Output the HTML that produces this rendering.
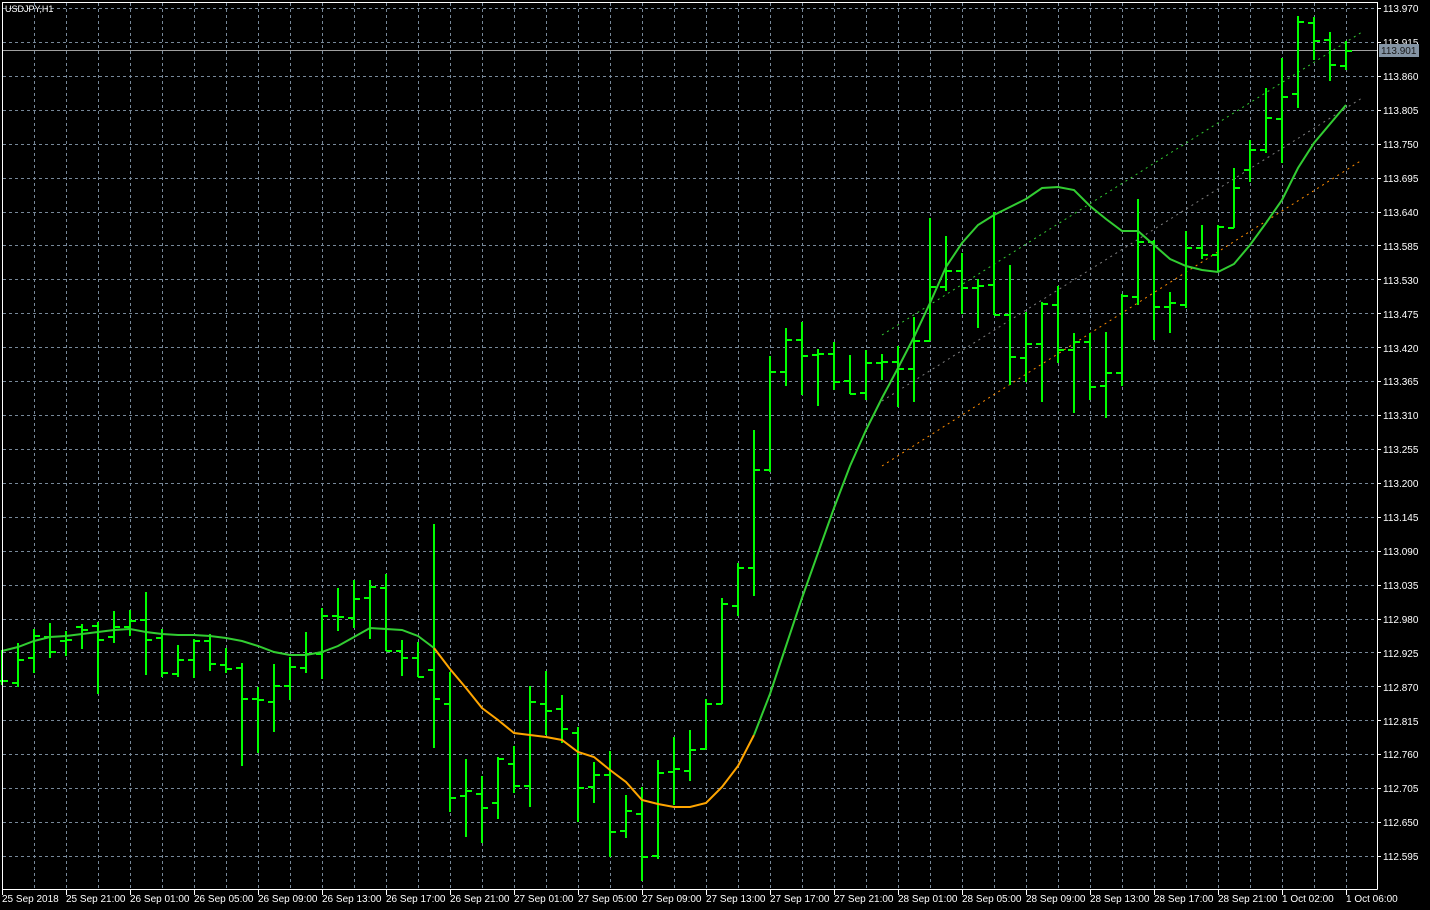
<!DOCTYPE html>
<html><head><meta charset="utf-8"><style>
html,body{margin:0;padding:0;background:#000;width:1430px;height:910px;overflow:hidden}
svg{display:block}
text{font-family:"Liberation Sans",sans-serif;font-size:10px;fill:#fff}
</style></head><body>
<svg id="c" width="1430" height="910" xmlns="http://www.w3.org/2000/svg">
<g id="grid" stroke="#778899" stroke-width="1" stroke-dasharray="3,3" fill="none"></g>
<g id="chan" fill="none" stroke-width="1" stroke-dasharray="2,4">
<line x1="882" y1="335" x2="1362" y2="32" stroke="#32cd32"/>
<line x1="882" y1="401" x2="1362" y2="98" stroke="#808080"/>
<line x1="882" y1="466" x2="1362" y2="160" stroke="#ff8c00"/>
</g>
<line x1="2" y1="50.5" x2="1377" y2="50.5" stroke="#a0a0a0" stroke-width="1"/>
<g id="bars" stroke="#00ff00" stroke-width="2"></g>
<polyline id="ma1" fill="none" stroke="#32cd32" stroke-width="2"/>
<polyline id="ma2" fill="none" stroke="#ffa500" stroke-width="2"/>
<polyline id="ma3" fill="none" stroke="#32cd32" stroke-width="2"/>
<g stroke="#fff" stroke-width="1" fill="none">
<line x1="2.5" y1="2" x2="2.5" y2="889.5"/>
<line x1="2" y1="889.5" x2="1377.5" y2="889.5"/>
<line x1="1377.5" y1="2" x2="1377.5" y2="889.5"/>
<line x1="2" y1="2.5" x2="1377.5" y2="2.5"/>
</g>
<g id="ticks" stroke="#fff" stroke-width="1"></g>
<text x="5" y="12" style="font-size:9px">USDJPY,H1</text>
<g id="yl">
<text x="1383" y="12">113.970</text><text x="1383" y="46">113.915</text><text x="1383" y="80">113.860</text><text x="1383" y="114">113.805</text><text x="1383" y="148">113.750</text><text x="1383" y="182">113.695</text><text x="1383" y="216">113.640</text><text x="1383" y="250">113.585</text><text x="1383" y="284">113.530</text><text x="1383" y="318">113.475</text><text x="1383" y="352">113.420</text><text x="1383" y="385">113.365</text><text x="1383" y="419">113.310</text><text x="1383" y="453">113.255</text><text x="1383" y="487">113.200</text><text x="1383" y="521">113.145</text><text x="1383" y="555">113.090</text><text x="1383" y="589">113.035</text><text x="1383" y="623">112.980</text><text x="1383" y="657">112.925</text><text x="1383" y="691">112.870</text><text x="1383" y="725">112.815</text><text x="1383" y="758">112.760</text><text x="1383" y="792">112.705</text><text x="1383" y="826">112.650</text><text x="1383" y="860">112.595</text>
</g>
<rect x="1379" y="44" width="40" height="13" fill="#8494a4"/>
<text x="1381" y="54" style="fill:#1a1a1a">113.901</text>
<g id="xl">
<text x="2" y="902">25 Sep 2018</text><text x="66" y="902">25 Sep 21:00</text><text x="130" y="902">26 Sep 01:00</text><text x="194" y="902">26 Sep 05:00</text><text x="258" y="902">26 Sep 09:00</text><text x="322" y="902">26 Sep 13:00</text><text x="386" y="902">26 Sep 17:00</text><text x="450" y="902">26 Sep 21:00</text><text x="514" y="902">27 Sep 01:00</text><text x="578" y="902">27 Sep 05:00</text><text x="642" y="902">27 Sep 09:00</text><text x="706" y="902">27 Sep 13:00</text><text x="770" y="902">27 Sep 17:00</text><text x="834" y="902">27 Sep 21:00</text><text x="898" y="902">28 Sep 01:00</text><text x="962" y="902">28 Sep 05:00</text><text x="1026" y="902">28 Sep 09:00</text><text x="1090" y="902">28 Sep 13:00</text><text x="1154" y="902">28 Sep 17:00</text><text x="1218" y="902">28 Sep 21:00</text><text x="1282" y="902">1 Oct 02:00</text><text x="1346" y="902">1 Oct 06:00</text>
</g>
</svg>
<script>
var NS="http://www.w3.org/2000/svg";
function el(p,t,a){var e=document.createElementNS(NS,t);for(var k in a)e.setAttribute(k,a[k]);p.appendChild(e);return e;}
var g=document.getElementById('grid');
for(var x=34;x<1377;x+=32)el(g,'line',{x1:x+.5,y1:3,x2:x+.5,y2:889});
for(var k=0;k<26;k++){var y=Math.round(8+33.92*k)+.5;el(g,'line',{x1:3,y1:y,x2:1377,y2:y});}
var t=document.getElementById('ticks');
for(var k=0;k<26;k++){var y=Math.round(8+33.92*k)+.5;el(t,'line',{x1:1377,y1:y,x2:1381,y2:y});}
for(var x=2;x<1377;x+=64)el(t,'line',{x1:x+.5,y1:889,x2:x+.5,y2:895});
var B=[[650,685,681,681],[643,687,683,660],[629,673,658,636],[623,658,637,652],[631,656,641,640],[624,649,627,630],[622,694,626,640],[611,643,637,627],[610,636,627,621],[592,675,620,640],[629,677,638,673],[645,677,674,660],[639,678,660,641],[634,671,641,664],[648,673,665,669],[663,766,668,699],[687,753,699,700],[664,732,702,686],[657,700,686,667],[632,673,668,654],[608,679,654,616],[588,631,616,617],[580,628,618,599],[580,639,598,587],[574,651,588,651],[640,676,651,658],[642,677,658,677],[524,748,670,699],[672,812,704,798],[759,837,796,791],[776,843,794,808],[757,819,803,759],[746,793,764,786],[686,807,786,702],[671,735,704,711],[695,743,709,729],[727,822,733,788],[762,803,787,775],[751,857,775,832],[795,838,831,811],[787,881,814,857],[760,859,856,773],[737,805,772,769],[730,781,771,750],[699,749,749,704],[598,704,704,604],[563,616,606,568],[430,596,568,470],[356,472,470,372],[328,386,372,340],[322,395,340,356],[349,406,355,354],[342,390,354,382],[355,394,381,394],[350,400,393,363],[354,380,363,362],[346,407,362,369],[317,402,369,341],[218,341,341,287],[236,291,287,271],[253,314,271,288],[279,328,288,286],[212,315,285,315],[265,385,315,357],[312,382,358,344],[302,402,344,304],[286,363,305,350],[333,413,350,342],[333,400,342,387],[332,418,386,373],[294,386,373,296],[199,305,297,242],[240,340,242,307],[292,333,307,303],[231,308,305,248],[225,259,248,255],[225,272,255,227],[168,228,228,188],[140,182,170,150],[88,153,150,118],[58,163,119,97],[16,108,94,22],[17,60,23,41],[32,81,40,65],[41,70,66,51]];
var bg=document.getElementById('bars');
B.forEach(function(b,i){var x=2+16*i;
el(bg,'line',{x1:x,y1:b[0],x2:x,y2:b[1]});
el(bg,'line',{x1:x-6,y1:b[2],x2:x,y2:b[2]});
el(bg,'line',{x1:x,y1:b[3],x2:x+6,y2:b[3]});});
var M=[651,647,641,637,636,634,632,630,629,632,634,635,635,636,638,641,646,652,655,655,652,646,637,628,629,630,636,648,669,688,708,720,733,735,737,740,752,757,770,782,800,804,807,807,803,787,766,735,694,646,598,553,508,466,430,398,368,337,303,267,243,225,215,207,199,188,187,190,206,219,231,231,245,259,266,270,272,264,245,223,200,168,143,124,105];
function pts(a,b){var s=[];for(var i=a;i<=b;i++)s.push((2+16*i)+','+M[i]);return s.join(' ');}
document.getElementById('ma1').setAttribute('points',pts(0,27));
document.getElementById('ma2').setAttribute('points',pts(27,47));
document.getElementById('ma3').setAttribute('points',pts(47,84));
</script>
</body></html>
